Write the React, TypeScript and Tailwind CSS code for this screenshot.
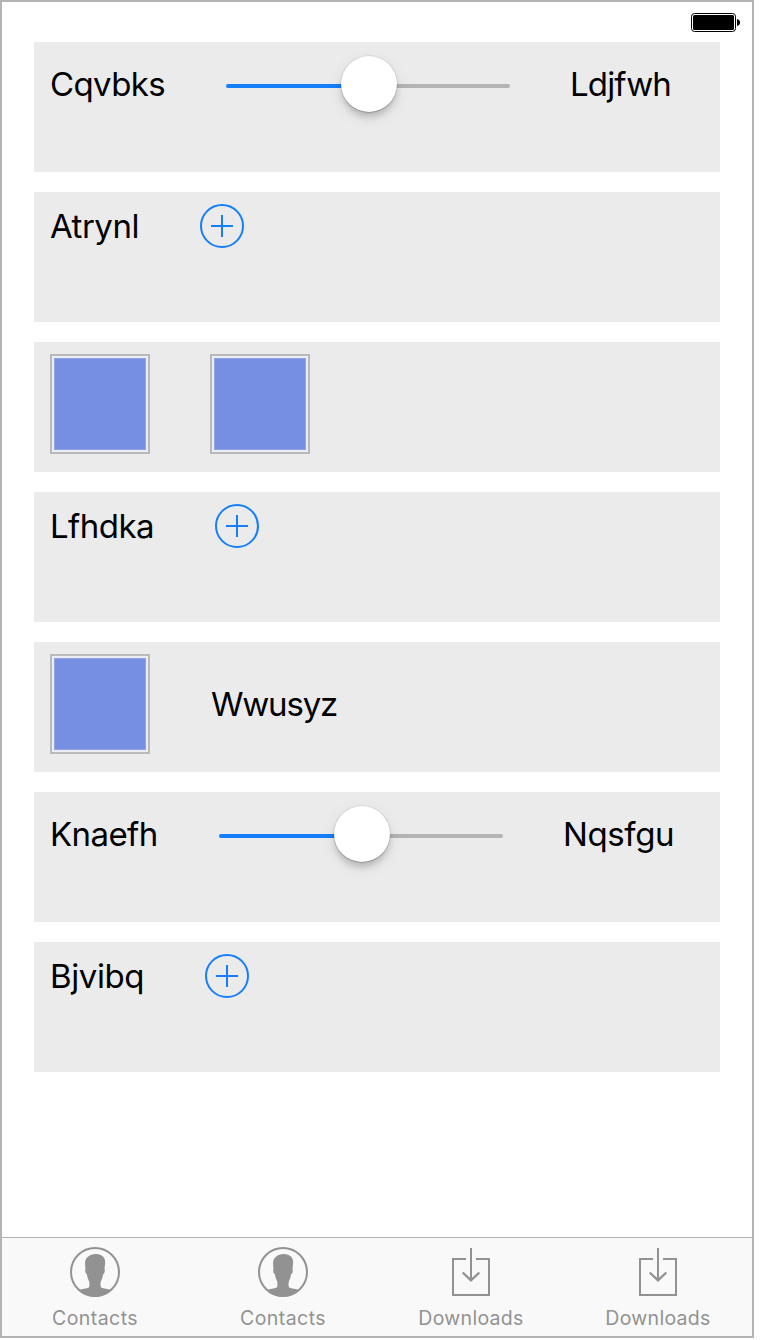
import type { ReactNode } from 'react';

function Row({ children }: { children: ReactNode }) {
  return (
    <section className="flex h-[130px] shrink-0 items-start gap-[60px] bg-[#ebebeb] px-4 pt-3">
      {children}
    </section>
  );
}

function Label({ text, className }: { text: string; className: string }) {
  return (
    <span className={`block shrink-0 whitespace-nowrap text-[33px] leading-[40px] text-black ${className}`}>
      {text}
    </span>
  );
}

function Slider() {
  return (
    <div className="relative flex h-16 w-[284px] shrink-0 items-center">
      <div className="flex h-1 w-full overflow-hidden rounded-full">
        <div className="w-1/2 bg-[#157efb]" />
        <div className="w-1/2 bg-[#b4b4b4]" />
      </div>
      <div className="absolute top-[2px] left-[115px] size-[56px] rounded-full bg-white shadow-[0_0_1px_0.5px_rgba(0,0,0,0.12),0_1px_1px_rgba(0,0,0,0.16),0_6px_6px_-1px_rgba(0,0,0,0.16),0_5px_16px_rgba(0,0,0,0.09)]" />
    </div>
  );
}

function AddButton() {
  return (
    <button type="button" aria-label="Add" className="size-11 shrink-0">
      <svg viewBox="0 0 44 44" className="size-11" fill="none" stroke="#157efb" strokeWidth="2">
        <circle cx="22" cy="22" r="21" />
        <path d="M11 22H33M22 11V33" />
      </svg>
    </button>
  );
}

function Tile() {
  return (
    <div className="size-[100px] shrink-0 border-2 border-[#b9b9b9] bg-[#ebeef8] p-[2px]">
      <div className="size-full border border-[#8fa2e6] bg-[#768fe2]" />
    </div>
  );
}

function ContactsIcon() {
  return (
    <svg viewBox="0 0 50 50" className="size-[50px]">
      <circle cx="25" cy="25" r="24" fill="none" stroke="#929292" strokeWidth="2" />
      <path
        fill="#929292"
        d="M25 50C18.5 50 13 47.300 8.800 43.300C12 41.600 16.500 41.800 18.800 40.500C19.700 39.600 19.600 36.500 19.200 34.500C18 32.500 17.300 30 16.900 27.300C15.300 26.500 14.800 23.300 15.500 21.300C14.500 16 15 11.500 18 9.800C20 7.800 23 6.900 26 7C29 7 31.500 8 33.500 10C35.700 12.500 35.300 17 34.500 21.300C35.200 23.300 34.700 26.500 33.100 27.300C32.700 30 32 32.500 30.800 34.500C30.400 36.500 30.300 39.600 31.200 40.500C33.500 41.800 38 41.600 41.200 43.300C37 47.300 31.500 50 25 50Z"
      />
    </svg>
  );
}

function DownloadsIcon() {
  return (
    <svg viewBox="0 0 50 50" className="size-[50px]" fill="none" stroke="#929292" strokeWidth="2">
      <path d="M20 12H7V48H43V12H30M25 1V34" />
      <path d="M16.700 25.500L25 33.300L33.300 25.500" strokeWidth="2.300" />
    </svg>
  );
}

function Tab({ icon, label, className }: { icon: ReactNode; label: string; className: string }) {
  return (
    <button type="button" className={`flex shrink-0 flex-col items-center pt-[9px] ${className}`}>
      {icon}
      <span className="mt-[9px] text-[19.500px] leading-6 text-[#929292]">{label}</span>
    </button>
  );
}

export default function App() {
  return (
    <div className="h-[1340px] w-[760px] bg-white font-['Inter',sans-serif]">
      <div className="flex h-[1338px] w-[754px] flex-col border-2 border-[#b3b3b3] bg-white">
        <header className="flex h-10 shrink-0 justify-end pt-[11px] pr-[12px]">
          <svg viewBox="0 0 49 19" className="h-[19px] w-[49px]">
            <rect x="0.500" y="0.500" width="44" height="18" rx="3" fill="none" stroke="#000" />
            <rect x="2" y="2" width="41" height="15" rx="1.500" fill="#000" />
            <path d="M46 6C50 6.500 50 12.500 46 13Z" fill="#000" />
          </svg>
        </header>
        <main className="flex flex-1 flex-col gap-5 px-8">
          <Row>
            <Label text="Cqvbks" className="mt-[10px] w-[116px] tracking-[-0.6px]" />
            <Slider />
            <Label text="Ldjfwh" className="mt-[10px] tracking-[-0.85px]" />
          </Row>
          <Row>
            <Label text="Atrynl" className="mt-[2px] w-[90px] tracking-[-0.5px]" />
            <AddButton />
          </Row>
          <Row>
            <Tile />
            <Tile />
          </Row>
          <Row>
            <Label text="Lfhdka" className="mt-[2px] w-[105px] tracking-[-0.55px]" />
            <AddButton />
          </Row>
          <Row>
            <Tile />
            <Label text="Wwusyz" className="mt-[30px] pl-px tracking-[-1.2px]" />
          </Row>
          <Row>
            <Label text="Knaefh" className="mt-[10px] w-[109px] tracking-[-0.6px]" />
            <Slider />
            <Label text="Nqsfgu" className="mt-[10px] tracking-[-0.4px]" />
          </Row>
          <Row>
            <Label text="Bjvibq" className="mt-[2px] w-[95px] tracking-[-0.4px]" />
            <AddButton />
          </Row>
        </main>
        <nav className="flex h-[99px] shrink-0 border-t border-[#b3b3b3] bg-[#f9f9f9]">
          <Tab icon={<ContactsIcon />} label="Contacts" className="w-[186px] tracking-[0.45px]" />
          <Tab icon={<ContactsIcon />} label="Contacts" className="w-[190px] tracking-[0.45px]" />
          <Tab icon={<DownloadsIcon />} label="Downloads" className="w-[186px] tracking-[0.3px]" />
          <Tab icon={<DownloadsIcon />} label="Downloads" className="w-[188px] tracking-[0.3px]" />
        </nav>
      </div>
    </div>
  );
}
